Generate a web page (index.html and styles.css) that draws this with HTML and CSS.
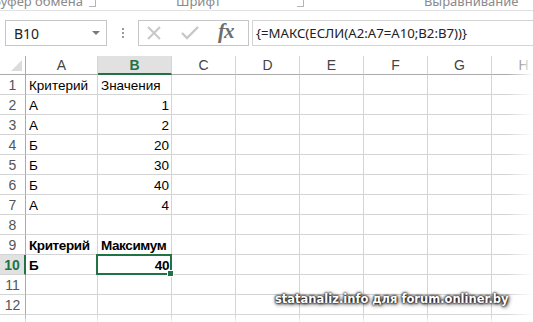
FILE: index.html
```html
<!DOCTYPE html>
<html>
<head>
    <meta charset="utf-8">
    <title>Excel</title>
    <link rel="stylesheet" href="styles.css">
</head>
<body>
    <div class="ribbon">
        <div class="ribbon-labels">
            <span class="group g-clip">Буфер обмена</span>
            <span class="launcher l-clip"></span>
            <span class="group g-font">Шрифт</span>
            <span class="launcher l-font"></span>
            <span class="group g-align">Выравнивание</span>
        </div>
    </div>

    <div class="formula-bar">
        <div class="name-box">
            <span>B10</span>
            <span class="arrow"></span>
        </div>
        <div class="grip"><i></i><i></i><i></i></div>
        <div class="fx-buttons">
            <svg class="btn-cancel" width="16" height="16" viewBox="0 0 16 16">
                <path d="M2 2 L14 14 M14 2 L2 14" stroke="#c8c8c8" stroke-width="2" fill="none"/>
            </svg>
            <svg class="btn-enter" width="20" height="16" viewBox="0 0 20 16">
                <path d="M2 8 L7 13 L18 2" stroke="#c8c8c8" stroke-width="2.4" fill="none"/>
            </svg>
            <span class="btn-fx">fx</span>
        </div>
        <div class="formula-input">{=МАКС(ЕСЛИ(A2:A7=A10;B2:B7))}</div>
    </div>

    <div class="sheet">
        <div class="grid">
            <div class="hd corner"><span class="tri"></span></div>
            <div class="hd col">A</div>
            <div class="hd col active">B</div>
            <div class="hd col">C</div>
            <div class="hd col">D</div>
            <div class="hd col">E</div>
            <div class="hd col">F</div>
            <div class="hd col">G</div>
            <div class="hd col">H</div>

            <div class="hd row">1</div>
            <div class="c">Критерий</div><div class="c">Значения</div>
            <div class="c"></div><div class="c"></div><div class="c"></div><div class="c"></div><div class="c"></div><div class="c"></div>

            <div class="hd row">2</div>
            <div class="c">А</div><div class="c num">1</div>
            <div class="c"></div><div class="c"></div><div class="c"></div><div class="c"></div><div class="c"></div><div class="c"></div>

            <div class="hd row">3</div>
            <div class="c">А</div><div class="c num">2</div>
            <div class="c"></div><div class="c"></div><div class="c"></div><div class="c"></div><div class="c"></div><div class="c"></div>

            <div class="hd row">4</div>
            <div class="c">Б</div><div class="c num">20</div>
            <div class="c"></div><div class="c"></div><div class="c"></div><div class="c"></div><div class="c"></div><div class="c"></div>

            <div class="hd row">5</div>
            <div class="c">Б</div><div class="c num">30</div>
            <div class="c"></div><div class="c"></div><div class="c"></div><div class="c"></div><div class="c"></div><div class="c"></div>

            <div class="hd row">6</div>
            <div class="c">Б</div><div class="c num">40</div>
            <div class="c"></div><div class="c"></div><div class="c"></div><div class="c"></div><div class="c"></div><div class="c"></div>

            <div class="hd row">7</div>
            <div class="c">А</div><div class="c num">4</div>
            <div class="c"></div><div class="c"></div><div class="c"></div><div class="c"></div><div class="c"></div><div class="c"></div>

            <div class="hd row">8</div>
            <div class="c"></div><div class="c"></div>
            <div class="c"></div><div class="c"></div><div class="c"></div><div class="c"></div><div class="c"></div><div class="c"></div>

            <div class="hd row">9</div>
            <div class="c bold">Критерий</div><div class="c bold">Максимум</div>
            <div class="c"></div><div class="c"></div><div class="c"></div><div class="c"></div><div class="c"></div><div class="c"></div>

            <div class="hd row active">10</div>
            <div class="c bold">Б</div><div class="c bold num selected">40</div>
            <div class="c"></div><div class="c"></div><div class="c"></div><div class="c"></div><div class="c"></div><div class="c"></div>

            <div class="hd row">11</div>
            <div class="c"></div><div class="c"></div>
            <div class="c"></div><div class="c"></div><div class="c"></div><div class="c"></div><div class="c"></div><div class="c"></div>

            <div class="hd row">12</div>
            <div class="c"></div><div class="c"></div>
            <div class="c"></div><div class="c"></div><div class="c"></div><div class="c"></div><div class="c"></div><div class="c"></div>

            <div class="hd row"></div>
            <div class="c"></div><div class="c"></div>
            <div class="c"></div><div class="c"></div><div class="c"></div><div class="c"></div><div class="c"></div><div class="c"></div>
        </div>
        <div class="fade-right"></div>
        <div class="fade-bottom"></div>
        <div class="watermark">statanaliz.info для forum.onliner.by</div>
    </div>
</body>
</html>
```

FILE: styles.css
```css
body {
    margin: 0;
    width: 533px;
    height: 322px;
    overflow: hidden;
    background: #ffffff;
    font-family: 'Liberation Sans', Arial, sans-serif;
    color: #000;
}

/* ribbon group captions, mostly scrolled off the top */
.ribbon {
    height: 10px;
    border-bottom: 1px solid #e1e1e1;
    overflow: hidden;
}

.ribbon-labels {
    display: flex;
    align-items: center;
    margin-top: -7px;
    height: 16px;
    font-family: 'Noto Sans', sans-serif;
    font-size: 13px;
    color: #8a8a8a;
    white-space: nowrap;
}

.g-clip {
    margin-left: -7px;
}

.launcher {
    width: 6px;
    height: 6px;
    border-right: 1px solid #b5b5b5;
    border-bottom: 1px solid #b5b5b5;
    margin-top: 4px;
}

.l-clip {
    margin-left: 6px;
}

.g-font {
    margin-left: 80px;
}

.l-font {
    margin-left: 76px;
}

.g-align {
    margin-left: 120px;
}

/* formula bar */
.formula-bar {
    display: flex;
    align-items: flex-start;
    height: 45px;
    padding-top: 9px;
    box-sizing: border-box;
}

.name-box {
    display: flex;
    align-items: center;
    justify-content: space-between;
    margin-left: 5px;
    width: 102px;
    height: 26px;
    padding: 0 6px 0 8px;
    box-sizing: border-box;
    border: 1px solid #c6c6c6;
    font-family: 'Noto Sans', sans-serif;
    font-size: 14px;
    color: #222;
}

.arrow {
    width: 0;
    height: 0;
    border-left: 4px solid transparent;
    border-right: 4px solid transparent;
    border-top: 4px solid #7a7a7a;
}

.grip {
    display: flex;
    flex-direction: column;
    gap: 2px;
    width: 31px;
    align-items: center;
    padding-top: 8px;
}

.grip i {
    width: 2px;
    height: 2px;
    background: #9a9a9a;
}

.fx-buttons {
    display: flex;
    align-items: center;
    width: 111px;
    height: 26px;
    box-sizing: border-box;
    border: 1px solid #c6c6c6;
    padding-left: 7px;
}

.btn-enter {
    margin-left: 18px;
}

.btn-fx {
    margin-left: 18px;
    font-family: 'Liberation Serif', serif;
    font-style: italic;
    font-weight: bold;
    font-size: 21px;
    color: #6e6e6e;
    letter-spacing: -1px;
    margin-top: -3px;
}

.formula-input {
    flex: 1;
    margin-left: 3px;
    margin-right: -4px;
    height: 26px;
    box-sizing: border-box;
    border: 1px solid #d4d4d4;
    padding-left: 3px;
    line-height: 24px;
    font-family: 'Noto Sans', sans-serif;
    font-size: 13.2px;
    color: #222;
    white-space: nowrap;
}

/* sheet grid */
.sheet {
    position: relative;
}

.grid {
    display: grid;
    grid-template-columns: 26px 72px 74px repeat(6, 64px);
    grid-template-rows: 19px;
    grid-auto-rows: 20px;
    font-size: 13.5px;
}

.hd {
    box-sizing: border-box;
    text-align: center;
    color: #444;
    font-size: 14px;
    line-height: 18px;
    background: #fff;
}

.col {
    border-right: 1px solid #d4d4d4;
    border-bottom: 1px solid #ababab;
}

.col.active {
    background: #e1e1e1;
    color: #217346;
    font-weight: bold;
    border-bottom: 2px solid #217346;
}

.corner {
    position: relative;
    border-right: 1px solid #ababab;
    border-bottom: 1px solid #ababab;
}

.tri {
    position: absolute;
    right: 3px;
    bottom: 3px;
    width: 0;
    height: 0;
    border-left: 11px solid transparent;
    border-bottom: 11px solid #dcdcdc;
}

.row {
    border-right: 1px solid #ababab;
    border-bottom: 1px solid #d4d4d4;
    line-height: 17px;
    padding-top: 2px;
    color: #555;
}

.row.active {
    background: #e1e1e1;
    color: #217346;
    font-weight: bold;
    border-right: 2px solid #217346;
}

.c {
    box-sizing: border-box;
    border-right: 1px solid #d4d4d4;
    border-bottom: 1px solid #d4d4d4;
    padding: 2px 2px 0 3px;
    line-height: 17px;
    white-space: nowrap;
}

.num {
    text-align: right;
}

.bold {
    font-weight: bold;
    letter-spacing: -0.4px;
}

.selected {
    position: relative;
}

.selected::after {
    content: '';
    position: absolute;
    top: -1px;
    left: -2px;
    right: -1px;
    bottom: -1px;
    border: 2px solid #217346;
}

.selected::before {
    content: '';
    position: absolute;
    right: -3px;
    bottom: -3px;
    width: 5px;
    height: 5px;
    background: #217346;
    border: 1px solid #fff;
    z-index: 1;
}

.fade-right {
    position: absolute;
    top: 0;
    right: 0;
    width: 26px;
    height: 270px;
    background: linear-gradient(to right, rgba(255, 255, 255, 0), #ffffff);
}

.fade-bottom {
    position: absolute;
    left: 0;
    right: 0;
    top: 258px;
    height: 12px;
    background: linear-gradient(to bottom, rgba(255, 255, 255, 0), #ffffff);
}

.watermark {
    position: absolute;
    left: 275px;
    top: 236px;
    font-family: 'DejaVu Sans', sans-serif;
    font-weight: bold;
    font-size: 11.5px;
    color: #ffffff;
    white-space: nowrap;
    text-shadow: 0 0 2px #000, 0 0 3px #000, 1px 1px 4px #000;
}
```
